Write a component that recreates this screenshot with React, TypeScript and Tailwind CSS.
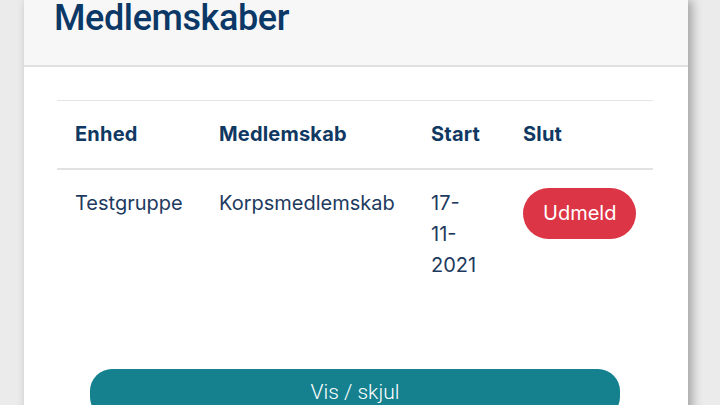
import React from "react";

interface Membership {
  unit: string;
  kind: string;
  start: string;
}

const memberships: Membership[] = [
  { unit: "Testgruppe", kind: "Korpsmedlemskab", start: "17-11-2021" },
];

function MembershipTable({ rows }: { rows: Membership[] }) {
  return (
    <table className="w-[596px] table-fixed border-collapse text-[20px] leading-[31px] text-left">
      <colgroup>
        <col className="w-[144px]" />
        <col className="w-[212px]" />
        <col className="w-[92px]" />
        <col className="w-[148px]" />
      </colgroup>
      <thead>
        <tr className="border-t border-[#e4e4e4] border-b-2 border-b-[#e2e2e2]">
          {["Enhed", "Medlemskab", "Start", "Slut"].map((h) => (
            <th
              key={h}
              className="px-[18px] py-[18px] font-bold text-[#0f3862] align-top tracking-[0.2px]"
            >
              {h}
            </th>
          ))}
        </tr>
      </thead>
      <tbody>
        {rows.map((r) => (
          <tr key={r.unit + r.kind}>
            <td className="px-[18px] py-[18px] align-top text-[#1e3a5e]">{r.unit}</td>
            <td className="px-[18px] py-[18px] align-top text-[#1e3a5e]">{r.kind}</td>
            <td className="pl-[18px] pr-[24px] py-[18px] align-top text-[#1e3a5e]">
              {r.start}
            </td>
            <td className="pl-[18px] pr-0 py-[18px] align-top">
              <button className="rounded-full bg-[#dc3545] px-[20px] py-[10px] text-white whitespace-nowrap">
                Udmeld
              </button>
            </td>
          </tr>
        ))}
      </tbody>
    </table>
  );
}

export default function App() {
  return (
    <div className="h-[405px] w-[720px] overflow-hidden bg-[#ebebeb] font-['Inter',sans-serif]">
      <div className="ml-[24px] w-[664px] min-h-[420px] bg-white shadow-[4px_0_10px_rgba(0,0,0,0.32)]">
        <div className="h-[67px] border-b-2 border-[#e0e0e0] bg-[#f7f7f7] pl-[30px]">
          <h1 className="font-['Roboto',sans-serif] text-[36px] font-medium leading-none tracking-[-0.4px] text-[#0b3866]">
            Medlemskaber
          </h1>
        </div>
        <div className="flex flex-col pl-[33px] pt-[33px]">
          <MembershipTable rows={memberships} />
          <button className="ml-[33px] mt-[70px] h-[50px] w-[530px] rounded-[22px] bg-[#15818f] pb-[2px] font-['Roboto',sans-serif] text-[21px] font-light text-white">
            Vis / skjul
          </button>
        </div>
      </div>
    </div>
  );
}
